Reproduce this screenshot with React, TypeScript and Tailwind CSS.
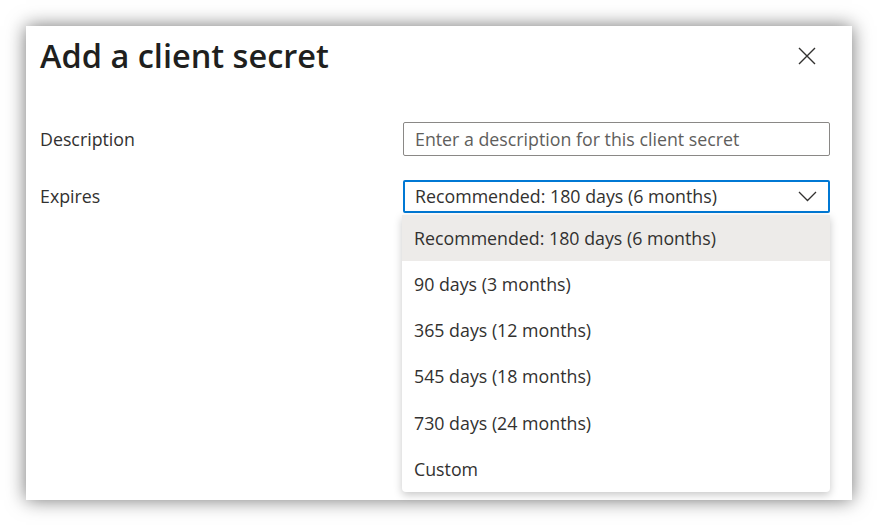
import React from "react";

const options = [
  "Recommended: 180 days (6 months)",
  "90 days (3 months)",
  "365 days (12 months)",
  "545 days (18 months)",
  "730 days (24 months)",
  "Custom",
];

export default function App() {
  return (
    <div className="w-[877px] h-[525px] bg-white pt-[26px] pl-[26px] font-['Open_Sans',sans-serif] text-[#323130]">
      <div className="w-[826px] h-[474px] bg-white shadow-[0_0_18px_rgba(0,0,0,0.55)] pl-[14px] pr-[22px] pt-[7px]">
        <div className="flex items-start justify-between">
          <h1 className="text-[32.5px] leading-[46px] font-semibold text-[#201f1e]">Add a client secret</h1>
          <button className="mt-[14px] mr-[14px] text-[#323130]">
            <svg width="18" height="18" viewBox="0 0 18 18" fill="none" stroke="currentColor" strokeWidth="1.4">
              <path d="M1 1 17 17M17 1 1 17" />
            </svg>
          </button>
        </div>

        <div className="mt-[43px] flex items-center">
          <div className="w-[363px] text-[17.8px]">Description</div>
          <div className="w-[427px] h-[34px] border border-[#8a8886] rounded-[2px] flex items-center px-[11px] text-[17.8px] text-[#605e5c]">
            Enter a description for this client secret
          </div>
        </div>

        <div className="mt-[24px] flex items-start">
          <div className="w-[362px] text-[17.8px] leading-[32px]">Expires</div>
          <div className="w-[428px]">
            <div className="ml-px w-[427px] h-[33px] border-2 border-[#0078d4] rounded-[2px] flex items-center justify-between pl-[10px] pr-[11px] text-[17.8px]">
              <span>Recommended: 180 days (6 months)</span>
              <svg width="19" height="11" viewBox="0 0 19 11" fill="none" stroke="#323130" strokeWidth="1.3">
                <path d="M1 1 9.5 9.5 18 1" />
              </svg>
            </div>
            <div className="mt-[2px] w-[428px] bg-white rounded-b-[4px] shadow-[0_3px_8px_rgba(0,0,0,0.22)]">
              {options.map((o, i) => (
                <div
                  key={o}
                  className={`h-[46.2px] flex items-center px-[12px] text-[17.8px] ${i === 0 ? "bg-[#edebe9]" : ""}`}
                >
                  {o}
                </div>
              ))}
            </div>
          </div>
        </div>
      </div>
    </div>
  );
}
